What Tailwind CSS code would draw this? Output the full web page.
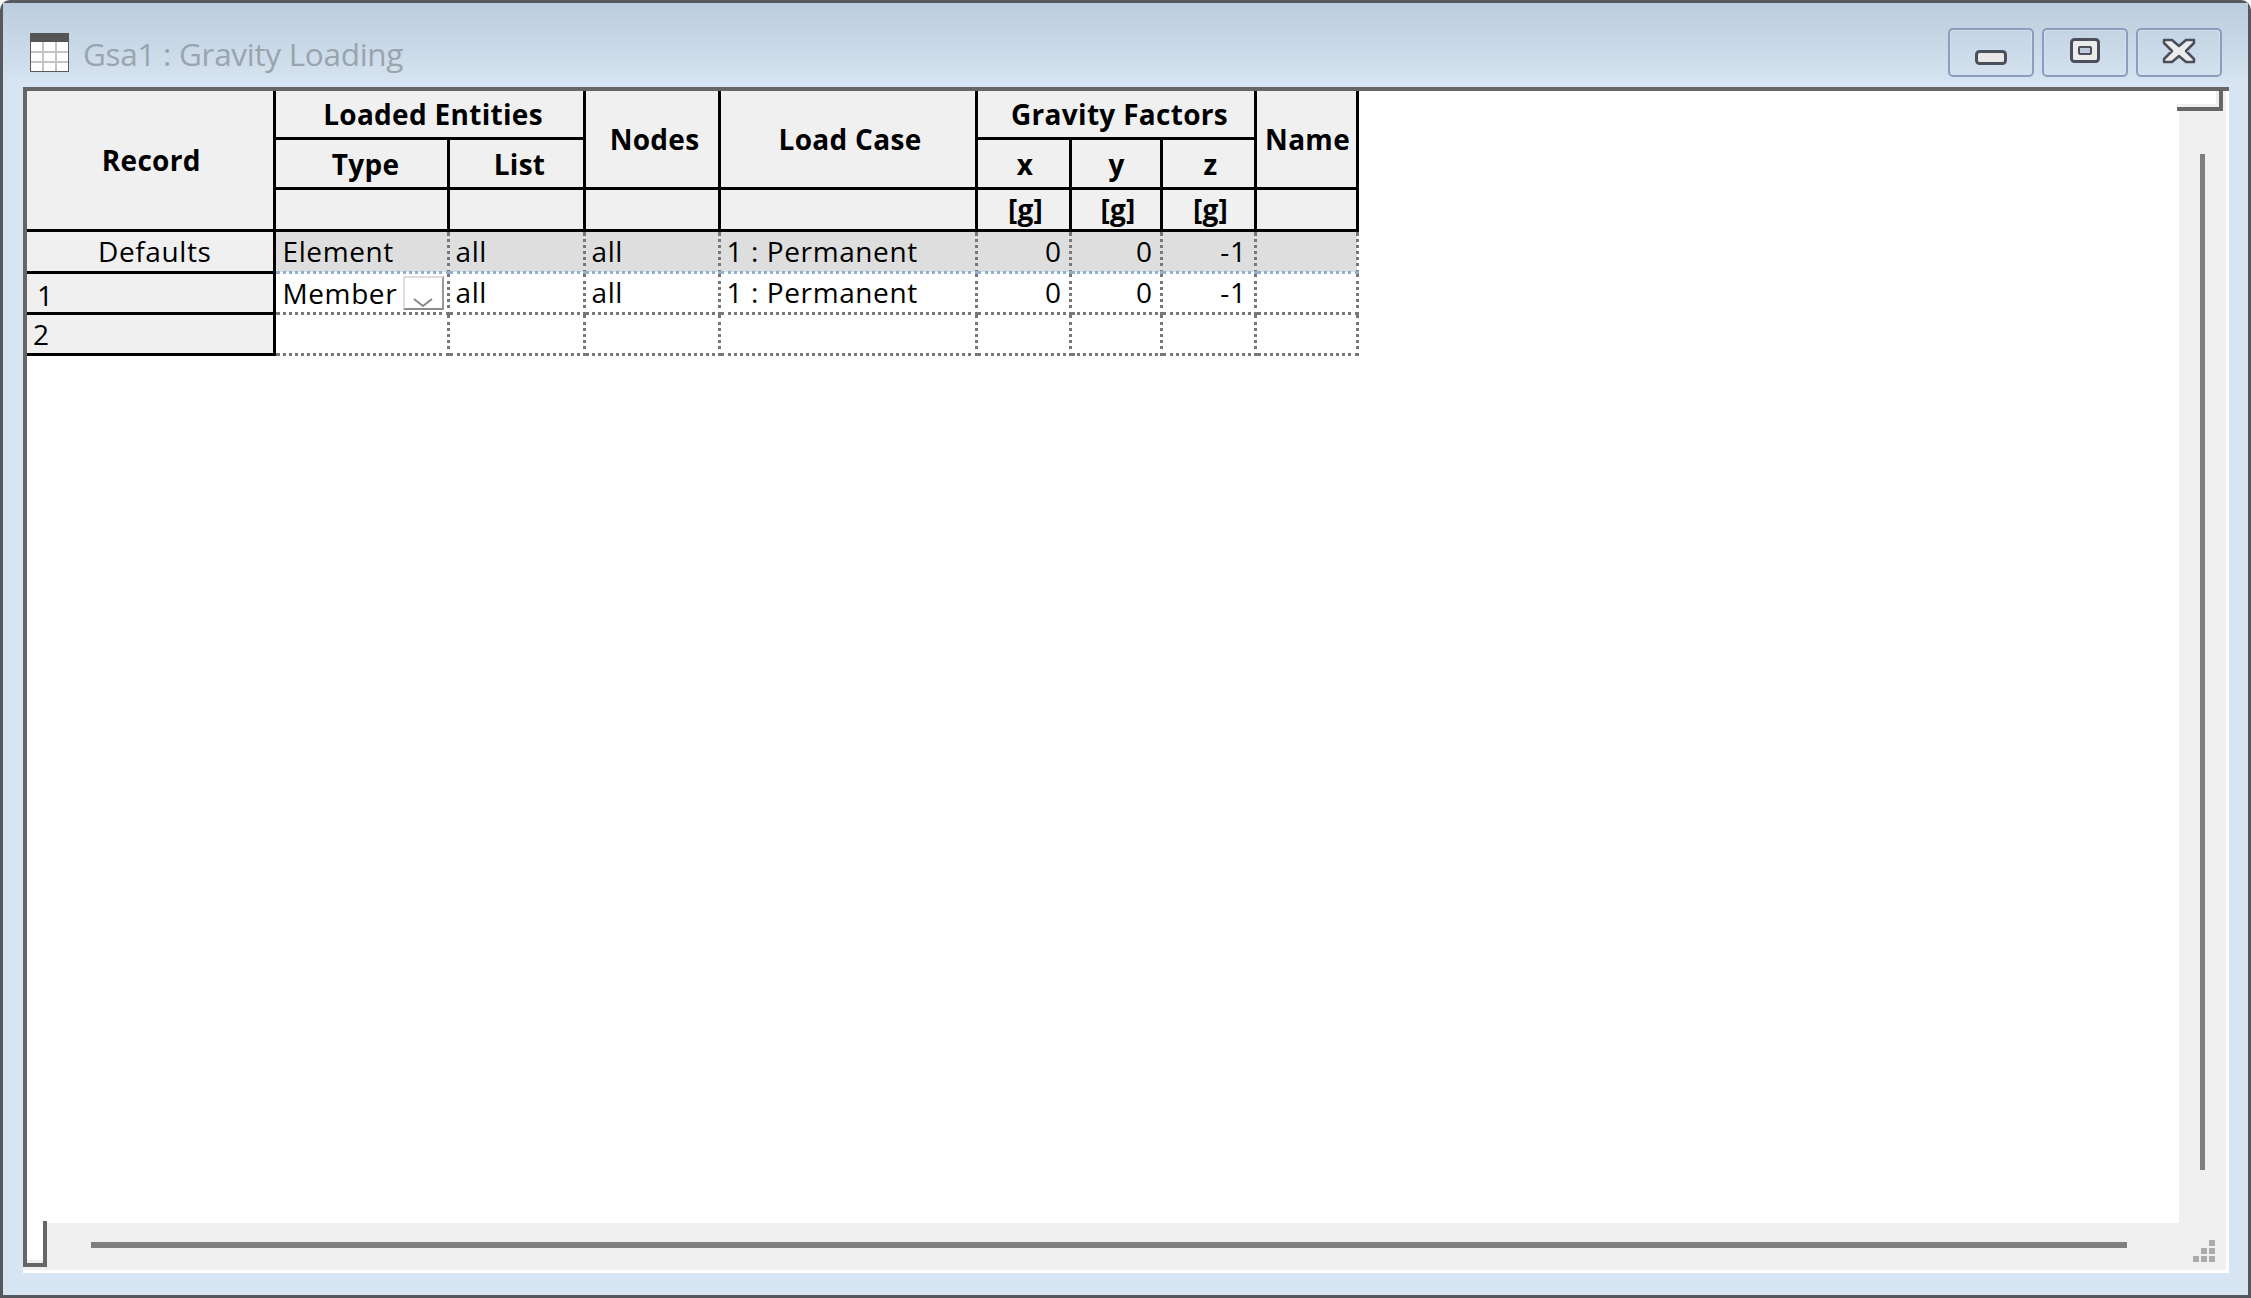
<!DOCTYPE html>
<html lang="en">
<head>
    <meta charset="UTF-8">
    <title>Gsa1 : Gravity Loading</title>
    <script src="https://cdn.jsdelivr.net/npm/@tailwindcss/browser@4"></script>
</head>
<body class="bg-white overflow-hidden">
    <div class="w-[2251px] h-[1298px] flex flex-col bg-[#d7e4f2] border-[3px] border-[#55585c] rounded-t-[10px] font-['Open_Sans',sans-serif] text-[28px] leading-none text-black">

        <!-- title bar -->
        <div class="h-[84px] shrink-0 pt-[15px] pl-[27px] pr-[26px] flex items-center bg-gradient-to-b from-[#bbccdc] to-[#d8e5f2]">
            <svg width="39" height="39" viewBox="0 0 39 39" class="shrink-0">
                <rect x="0.5" y="0.5" width="38" height="38" fill="#fff" stroke="#5a5a5a"/>
                <rect x="0" y="0" width="39" height="9" fill="#555"/>
                <path d="M1 19h37M1 29h37M13 9v29M26 9v29" stroke="#c4c4c4" stroke-width="2"/>
            </svg>
            <span class="ml-[14px] mt-[2px] text-[31.5px] tracking-[-0.3px] text-[#9aa4ae]">Gsa1 : Gravity Loading</span>
            <div class="ml-auto flex gap-[8px]">
                <div class="w-[86px] h-[49px] rounded-[5px] border-2 border-[#8d9dbd] shadow-[inset_0_0_0_1px_#d5e0ec] flex items-center justify-center">
                    <svg width="32" height="15" viewBox="0 0 32 15" class="mt-[10px]">
                        <rect x="1.5" y="1.5" width="29" height="12" rx="3" fill="#e8e8e8" stroke="#4b4f5c" stroke-width="3"/>
                    </svg>
                </div>
                <div class="w-[86px] h-[49px] rounded-[5px] border-2 border-[#8d9dbd] shadow-[inset_0_0_0_1px_#d5e0ec] flex items-center justify-center">
                    <svg width="30" height="25" viewBox="0 0 30 25" class="mb-[4px]">
                        <rect x="1.5" y="1.5" width="27" height="22" rx="3" fill="#ececec" stroke="#4b4f5c" stroke-width="3"/>
                        <rect x="9" y="9" width="12" height="7" rx="1" fill="#bcccdc" stroke="#4b4f5c" stroke-width="2"/>
                    </svg>
                </div>
                <div class="w-[86px] h-[49px] rounded-[5px] border-2 border-[#8d9dbd] shadow-[inset_0_0_0_1px_#d5e0ec] flex items-center justify-center">
                    <svg width="34" height="26" viewBox="0 0 34 26" class="mb-[4px]">
                        <path d="M2 2h8l7 6 7-6h8v3l-8 8 8 8v3h-8l-7-6-7 6H2v-3l8-8-8-8z" fill="#ececec" stroke="#4b4f5c" stroke-width="2.5" stroke-linejoin="round"/>
                    </svg>
                </div>
            </div>
        </div>

        <!-- client area -->
        <div class="ml-[20px] w-[2206px] h-[1186px] bg-white border-t-4 border-[#666] pr-[3px] pb-[3px] flex flex-col">
            <div class="flex-1 flex min-h-0 border-l-4 border-[#666]">
                <div class="flex-1 min-w-0">
                    <table class="table-fixed border-collapse w-[1330px] text-center">
                        <colgroup>
                            <col class="w-[247px]"><col class="w-[174px]"><col class="w-[136px]"><col class="w-[135px]"><col class="w-[257px]"><col class="w-[94px]"><col class="w-[91px]"><col class="w-[94px]"><col class="w-[102px]">
                        </colgroup>
                        <thead class="bg-[#f0f0f0] font-bold tracking-[0.3px]">
                            <tr class="h-[47px]">
                                <th rowspan="3" class="font-bold pl-[3px] border-r-[3px] border-b-[3px] border-black">Record</th>
                                <th colspan="2" class="font-bold pl-[8px] border-r-[3px] border-b-[3px] border-black">Loaded Entities</th>
                                <th rowspan="2" class="font-bold pl-[6px] border-r-[3px] border-b-[3px] border-black">Nodes</th>
                                <th rowspan="2" class="font-bold pl-[5px] border-r-[3px] border-b-[3px] border-black">Load Case</th>
                                <th colspan="3" class="font-bold pl-[8px] border-r-[3px] border-b-[3px] border-black">Gravity Factors</th>
                                <th rowspan="2" class="font-bold pl-[3px] border-r-[3px] border-b-[3px] border-black">Name</th>
                            </tr>
                            <tr class="h-[50px]">
                                <th class="font-bold pt-0.5 pl-[9px] border-r-[3px] border-b-[3px] border-black">Type</th>
                                <th class="font-bold pt-0.5 pl-[7px] border-r-[3px] border-b-[3px] border-black">List</th>
                                <th class="font-bold pt-0.5 pl-[4px] border-r-[3px] border-b-[3px] border-black">x</th>
                                <th class="font-bold pt-0.5 pl-[2px] border-r-[3px] border-b-[3px] border-black">y</th>
                                <th class="font-bold pt-0.5 pl-[5px] border-r-[3px] border-b-[3px] border-black">z</th>
                            </tr>
                            <tr class="h-[42px]">
                                <th class="border-r-[3px] border-b-[3px] border-black"></th>
                                <th class="border-r-[3px] border-b-[3px] border-black"></th>
                                <th class="border-r-[3px] border-b-[3px] border-black"></th>
                                <th class="border-r-[3px] border-b-[3px] border-black"></th>
                                <th class="font-bold pl-[5px] border-r-[3px] border-b-[3px] border-black">[g]</th>
                                <th class="font-bold pl-[5px] border-r-[3px] border-b-[3px] border-black">[g]</th>
                                <th class="font-bold pl-[5px] border-r-[3px] border-b-[3px] border-black">[g]</th>
                                <th class="border-r-[3px] border-b-[3px] border-black"></th>
                            </tr>
                        </thead>
                        <tbody class="font-normal text-left tracking-[0.6px]">
                            <tr class="h-[42px] bg-[#dedede]">
                                <td class="bg-[#f0f0f0] text-center pl-[10px] border-r-[3px] border-b-[3px] border-black">Defaults</td>
                                <td class="pl-[7px] border-r-[3px] border-b-[3px] border-r-[#777] border-b-[#8fb0d6] border-dotted">Element</td>
                                <td class="pl-[6px] border-r-[3px] border-b-[3px] border-r-[#777] border-b-[#8fb0d6] border-dotted">all</td>
                                <td class="pl-[6px] border-r-[3px] border-b-[3px] border-r-[#777] border-b-[#8fb0d6] border-dotted">all</td>
                                <td class="pl-[6px] border-r-[3px] border-b-[3px] border-r-[#777] border-b-[#8fb0d6] border-dotted">1 : Permanent</td>
                                <td class="text-right pr-[7px] border-r-[3px] border-b-[3px] border-r-[#777] border-b-[#8fb0d6] border-dotted">0</td>
                                <td class="text-right pr-[7px] border-r-[3px] border-b-[3px] border-r-[#777] border-b-[#8fb0d6] border-dotted">0</td>
                                <td class="text-right pr-[7px] border-r-[3px] border-b-[3px] border-r-[#777] border-b-[#8fb0d6] border-dotted">-1</td>
                                <td class="border-r-[3px] border-b-[3px] border-r-[#777] border-b-[#8fb0d6] border-dotted"></td>
                            </tr>
                            <tr class="h-[41px]">
                                <td class="bg-[#f0f0f0] pl-[10px] pt-1 border-r-[3px] border-b-[3px] border-black">1</td>
                                <td class="pl-[7px] pr-[3px] border-r-[3px] border-b-[3px] border-[#777] border-dotted">
                                    <div class="flex items-center justify-between">
                                        Member
                                        <span class="w-[41px] h-[34px] bg-white border-2 border-[#ddd] border-r-[#999] border-b-[#8c8c8c] flex items-end justify-center">
                                            <svg width="22" height="12" viewBox="0 0 22 12"><path d="M2 3l9 7 9-7" fill="none" stroke="#888" stroke-width="2"/></svg>
                                        </span>
                                    </div>
                                </td>
                                <td class="pl-[6px] pb-[2px] border-r-[3px] border-b-[3px] border-[#777] border-dotted">all</td>
                                <td class="pl-[6px] pb-[2px] border-r-[3px] border-b-[3px] border-[#777] border-dotted">all</td>
                                <td class="pl-[6px] pb-[2px] border-r-[3px] border-b-[3px] border-[#777] border-dotted">1 : Permanent</td>
                                <td class="text-right pr-[7px] pb-[2px] border-r-[3px] border-b-[3px] border-[#777] border-dotted">0</td>
                                <td class="text-right pr-[7px] pb-[2px] border-r-[3px] border-b-[3px] border-[#777] border-dotted">0</td>
                                <td class="text-right pr-[7px] pb-[2px] border-r-[3px] border-b-[3px] border-[#777] border-dotted">-1</td>
                                <td class="border-r-[3px] border-b-[3px] border-[#777] border-dotted"></td>
                            </tr>
                            <tr class="h-[41px]">
                                <td class="bg-[#f0f0f0] pl-[6px] border-r-[3px] border-b-[3px] border-black">2</td>
                                <td class="border-r-[3px] border-b-[3px] border-[#777] border-dotted"></td>
                                <td class="border-r-[3px] border-b-[3px] border-[#777] border-dotted"></td>
                                <td class="border-r-[3px] border-b-[3px] border-[#777] border-dotted"></td>
                                <td class="border-r-[3px] border-b-[3px] border-[#777] border-dotted"></td>
                                <td class="border-r-[3px] border-b-[3px] border-[#777] border-dotted"></td>
                                <td class="border-r-[3px] border-b-[3px] border-[#777] border-dotted"></td>
                                <td class="border-r-[3px] border-b-[3px] border-[#777] border-dotted"></td>
                                <td class="border-r-[3px] border-b-[3px] border-[#777] border-dotted"></td>
                            </tr>
                        </tbody>
                    </table>
                </div>

                <!-- vertical scrollbar -->
                <div class="w-[47px] shrink-0 bg-[#f0f0f0] flex flex-col items-center">
                    <div class="w-[46px] h-[20px] -ml-[5px] bg-white border-r-4 border-b-4 border-[#666] shadow-[inset_-3px_-3px_0_#eee]"></div>
                    <div class="w-[5px] mt-[43px] h-[1016px] -ml-[1px] bg-[#7f7f7f]"></div>
                </div>
            </div>

            <!-- horizontal scrollbar -->
            <div class="h-[47px] shrink-0 bg-[#f0f0f0] flex items-center">
                <div class="w-[24px] h-[46px] -mt-[2px] self-start bg-white border-l-4 border-r-4 border-b-4 border-[#666] shadow-[inset_0_-3px_0_#eee]"></div>
                <div class="ml-[44px] mb-[3px] w-[2036px] h-[6px] bg-[#7f7f7f]"></div>
                <svg width="24" height="24" viewBox="0 0 24 24" class="ml-[66px] mt-[10px]" fill="#aaa">
                    <rect x="16" y="0" width="6" height="6"/>
                    <rect x="8" y="8" width="6" height="6"/><rect x="16" y="8" width="6" height="6"/>
                    <rect x="0" y="16" width="6" height="6"/><rect x="8" y="16" width="6" height="6"/><rect x="16" y="16" width="6" height="6"/>
                </svg>
            </div>
        </div>
    </div>
</body>
</html>
